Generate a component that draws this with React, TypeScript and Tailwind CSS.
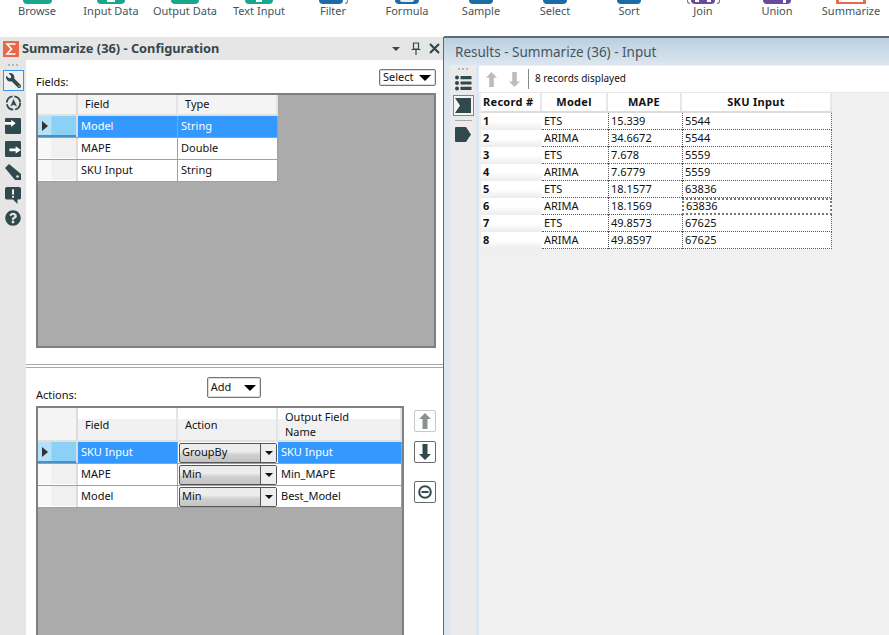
import React from "react";
import { FaWrench, FaQuestionCircle } from "react-icons/fa";

const toolbarItems: { label: string; icon: string; inner?: React.ReactNode; side?: boolean }[] = [
  { label: "Browse", icon: "w-[29px] rounded-b-md bg-[#17a78d]" },
  { label: "Input Data", icon: "w-[28px] rounded-b-md bg-[#17a78d]", inner: <div className="w-[8px] h-[2px] bg-white" /> },
  { label: "Output Data", icon: "w-[28px] rounded-b-sm bg-[#17a78d]" },
  { label: "Text Input", icon: "w-[28px] rounded-b-md bg-[#17a78d]", inner: <div className="w-[6px] h-[2px] bg-white" /> },
  { label: "Filter", icon: "w-[24px] rounded-b-full bg-[#1c6aa6]", side: true },
  { label: "Formula", icon: "w-[24px] rounded-b-full bg-[#1c6aa6]", inner: <div className="w-[14px] h-[2px] rounded-b-full bg-[#dfeaf3]" /> },
  { label: "Sample", icon: "w-[24px] rounded-b-full bg-[#1c6aa6]" },
  { label: "Select", icon: "w-[24px] rounded-b-full bg-[#1c6aa6]" },
  { label: "Sort", icon: "w-[24px] rounded-b-full bg-[#1c6aa6]" },
  { label: "Join", icon: "w-[24px] rounded-b-sm bg-[#6a4a9e]", side: true, inner: <div className="w-[16px] flex justify-between"><div className="w-[4px] h-[2px] bg-white" /><div className="w-[4px] h-[2px] bg-white" /></div> },
  { label: "Union", icon: "w-[28px] rounded-b-sm bg-[#6a4a9e]", inner: <div className="w-[18px] flex justify-end"><div className="w-[3px] h-[3px] bg-white" /></div> },
  { label: "Summarize", icon: "w-[30px] bg-[#e8694a]", inner: <div className="w-[24px] h-[2px] bg-white" /> },
];

const results = [
  ["1", "ETS", "15.339", "5544"],
  ["2", "ARIMA", "34.6672", "5544"],
  ["3", "ETS", "7.678", "5559"],
  ["4", "ARIMA", "7.6779", "5559"],
  ["5", "ETS", "18.1577", "63836"],
  ["6", "ARIMA", "18.1569", "63836"],
  ["7", "ETS", "49.8573", "67625"],
  ["8", "ARIMA", "49.8597", "67625"],
];

const ICON = "#30494c";

const BlockArrow = ({ up, color, w, h }: { up?: boolean; color: string; w: number; h: number }) => (
  <svg width={w} height={h} viewBox="0 0 12 16" preserveAspectRatio="none" className={up ? "" : "rotate-180"}>
    <path d="M6 0 L12 6 H8.5 V16 H3.5 V6 H0 Z" fill={color} />
  </svg>
);

const RowHeader = ({ active }: { active?: boolean }) => (
  <div
    className={
      active
        ? "w-[38px] shrink-0 flex items-center pl-[4px] border-b-2 border-[#4a90c8] bg-[linear-gradient(90deg,#b4e0f8_0%,#b4e0f8_35%,#8bd0f5_36%,#8bd0f5_100%)]"
        : "w-[38px] shrink-0 border-b border-white bg-[linear-gradient(90deg,#f8f8f8_0%,#f8f8f8_35%,#f0f0f0_36%,#f0f0f0_100%)]"
    }
  >
    {active && <div className="w-0 h-0 border-y-[5px] border-y-transparent border-l-[6px] border-l-[#333]" />}
  </div>
);

const Cell = ({ w, active, children }: { w: string; active?: boolean; children?: React.ReactNode }) => (
  <div
    className={`${w} shrink-0 flex items-center pl-[3px] border-r border-[#a0a0a0] ${
      active ? "bg-[#3399ff] text-white" : "bg-white text-[#111]"
    }`}
  >
    {children}
  </div>
);

const HeadCell = ({ w, extra, children }: { w: string; extra?: string; children?: React.ReactNode }) => (
  <div className={`${w} ${extra ?? ""} shrink-0 flex items-center pl-[7px] leading-[15px] border-r-2 border-[#e4e4e4] text-[#111]`}>
    <span>{children}</span>
  </div>
);

const ComboCell = ({ value }: { value: string }) => (
  <div className="w-[100px] shrink-0 flex items-center bg-white px-px">
    <div className="h-[20px] flex-1 flex items-center justify-between rounded-[2px] border border-[#555] bg-[linear-gradient(180deg,#ededed_0%,#ededed_40%,#cfcfcf_60%,#c4c4c4_100%)]">
      <span className="pl-[2px] text-[#111]">{value}</span>
      <div className="w-[16px] h-full flex items-center justify-center border-l border-[#555] bg-[#eeeeee]">
        <div className="w-0 h-0 border-x-[4px] border-x-transparent border-t-[4px] border-t-[#111]" />
      </div>
    </div>
  </div>
);

const DropButton = ({ label, w, h }: { label: string; w: string; h: string }) => (
  <div className={`${w} ${h} flex items-center justify-between pl-[3px] pr-[4px] rounded-[2px] border border-[#777] bg-white shadow-[inset_0_0_0_1px_#dddddd]`}>
    <span className="text-[#111]">{label}</span>
    <div className="w-0 h-0 border-x-[6px] border-x-transparent border-t-[6px] border-t-black" />
  </div>
);

const SideButton = ({ children, extra }: { children: React.ReactNode; extra?: string }) => (
  <div className={`w-[22px] h-[22px] flex items-center justify-center rounded-[2px] border ${extra}`}>{children}</div>
);

const RailIcons = () => (
  <div className="w-[26px] shrink-0 flex flex-col items-center bg-[#e6e6e6]">
    <div className="mt-[4px] h-[2px] w-[10px] bg-[repeating-linear-gradient(90deg,#b5b5b5_0px,#b5b5b5_2px,transparent_2px,transparent_4px)]" />
    <div className="mt-[4px] w-[21px] h-[21px] flex items-center justify-center border border-[#3a97e8] bg-[#f0f0f0]">
      <FaWrench size={15} color={ICON} className="-scale-x-100" />
    </div>
    <svg className="mt-[4px]" width="17" height="16" viewBox="0 0 18 18">
      <circle cx="9" cy="9" r="7.5" fill="none" stroke={ICON} strokeWidth="2" strokeDasharray="10 2" />
      <path d="M9 4.5 L13 13 L9 11 L5.5 13 Z" fill={ICON} />
    </svg>
    <svg className="mt-[7px]" width="16" height="16" viewBox="0 0 18 18">
      <rect width="18" height="18" rx="1.5" fill={ICON} />
      <path d="M0 4.5 H7 V2 L12 6 L7 10 V7.5 H0 Z" fill="#fff" />
    </svg>
    <svg className="mt-[7px]" width="16" height="16" viewBox="0 0 18 18">
      <rect width="18" height="18" rx="1.5" fill={ICON} />
      <path d="M5 8.5 H12 V6 L18 10 L12 14 V11.5 H5 Z" fill="#fff" />
    </svg>
    <svg className="mt-[7px]" width="16" height="16" viewBox="0 0 16 16">
      <path d="M0 4 L4 0 L16 10 V16 H10 Z" fill={ICON} />
      <circle cx="12.5" cy="12.5" r="1.3" fill="#e6e6e6" />
    </svg>
    <svg className="mt-[7px]" width="16" height="17" viewBox="0 0 18 19">
      <path d="M2 0 H16 Q18 0 18 2 V12 Q18 14 16 14 H14 L14 19 L9 14 H2 Q0 14 0 12 V2 Q0 0 2 0 Z" fill={ICON} />
      <rect x="8" y="2.5" width="2" height="6" fill="#fff" />
      <rect x="8" y="10" width="2" height="2" fill="#fff" />
    </svg>
    <FaQuestionCircle size={16} color={ICON} className="mt-[6px]" />
  </div>
);

export default function App() {
  return (
    <div className="w-[889px] h-[635px] overflow-hidden flex flex-col bg-white text-[11px] font-['Noto_Sans',sans-serif]">
      {/* top ribbon, icons are cut off by the window edge */}
      <div className="h-[37px] shrink-0 flex">
        {toolbarItems.map((item) => (
          <div key={item.label} className="w-[74px] flex flex-col items-center text-[#44545a]">
            <div className="flex items-start">
              {item.side && item.label === "Join" && <span className="mr-[1px] h-[4px] w-[3px] rounded-bl-full border-b border-l border-[#777]" />}
              <div className={`h-[4px] flex justify-center items-start ${item.icon}`}>{item.inner}</div>
              {item.side && <span className="ml-[2px] h-[4px] w-[3px] rounded-br-full border-b border-r border-[#777]" />}
            </div>
            <span className="leading-[14px]">{item.label}</span>
          </div>
        ))}
      </div>

      <div className="flex-1 flex min-h-0">
        {/* config panel */}
        <div className="w-[444px] shrink-0 flex flex-col border-r border-[#5f6b72]">
          <div className="h-[23px] shrink-0 flex items-center bg-[#e6e6e6] pl-[3px] pr-[3px]">
            <svg width="16" height="16" viewBox="0 0 16 16">
              <rect width="16" height="16" fill="#e8694a" />
              <path d="M12.5 3 H4 L8.5 8 L4 13 H12.5" fill="none" stroke="#fff" strokeWidth="1.6" />
            </svg>
            <span className="ml-[3px] text-[12.8px] font-bold text-[#36474d]">Summarize (36)  - Configuration</span>
            <div className="ml-auto w-0 h-0 border-x-[4px] border-x-transparent border-t-[4px] border-t-[#30494c]" />
            <svg className="ml-[11px]" width="10" height="13" viewBox="0 0 10 13">
              <path d="M2.5 1 H7.5 V7 H2.5 Z M0.5 7.5 H9.5 M5 8 V13" fill="none" stroke="#30494c" strokeWidth="1.2" />
            </svg>
            <svg className="ml-[8px]" width="11" height="11" viewBox="0 0 11 11">
              <path d="M1 1 L10 10 M10 1 L1 10" stroke="#30494c" strokeWidth="2.2" />
            </svg>
          </div>
          <div className="flex-1 flex min-h-0">
            <RailIcons />
            <div className="flex-1 flex flex-col min-w-0">
              {/* fields */}
              <div className="h-[304px] shrink-0 pl-[10px] pr-[7px] flex flex-col">
                <div className="h-[33px] flex items-end justify-between">
                  <span className="leading-[15px] mb-[4px] text-[#111]">Fields:</span>
                  <DropButton label="Select" w="w-[57px]" h="h-[17px] mb-[7px]" />
                </div>
                <div className="h-[255px] border-2 border-[#808080] bg-[#ababab]">
                  <div className="h-[21px] w-[240px] flex bg-[#f4f4f4] border-b-2 border-[#e0e0e0]">
                    <div className="w-[40px] shrink-0 border-r-2 border-[#dcdcdc]" />
                    <HeadCell w="w-[100px]" extra="pb-[2px]">Field</HeadCell>
                    <HeadCell w="w-[100px]" extra="pb-[2px]">Type</HeadCell>
                  </div>
                  {[
                    ["Model", "String"],
                    ["MAPE", "Double"],
                    ["SKU Input", "String"],
                  ].map((row, i) => (
                    <div key={row[0]} className="h-[22px] w-[240px] flex border-b border-[#a0a0a0]">
                      <RowHeader active={i === 0} />
                      <div className="w-[2px] bg-[#dcdcdc]" />
                      <Cell w="w-[100px]" active={i === 0}>{row[0]}</Cell>
                      <Cell w="w-[100px]" active={i === 0}>{row[1]}</Cell>
                    </div>
                  ))}
                </div>
              </div>
              {/* splitter */}
              <div className="h-[4px] shrink-0 border-y border-[#a8a8a8]" />
              {/* actions */}
              <div className="flex-1 min-h-0 pl-[10px] pr-[7px] flex flex-col">
                <div className="h-[38px] shrink-0 flex items-end">
                  <span className="leading-[15px] mb-[4px] text-[#111]">Actions:</span>
                  <DropButton label="Add" w="w-[54px] ml-[130px]" h="h-[21px] mb-[8px]" />
                </div>
                <div className="flex-1 flex min-h-0">
                  <div className="w-[368px] shrink-0 border-2 border-b-0 border-[#808080] bg-[#ababab]">
                    <div className="h-[34px] flex bg-[linear-gradient(180deg,#ffffff_0%,#ffffff_35%,#f1f1f1_36%,#f1f1f1_100%)] border-b-2 border-[#e0e0e0]">
                      <div className="w-[40px] shrink-0 border-r-2 border-[#dcdcdc] bg-[#f4f4f4]" />
                      <HeadCell w="w-[100px]">Field</HeadCell>
                      <HeadCell w="w-[100px]">Action</HeadCell>
                      <HeadCell w="w-[124px]">
                        Output Field
                        <br />
                        Name
                      </HeadCell>
                    </div>
                    {[
                      ["SKU Input", "GroupBy", "SKU Input"],
                      ["MAPE", "Min", "Min_MAPE"],
                      ["Model", "Min", "Best_Model"],
                    ].map((row, i) => (
                      <div key={row[0]} className="h-[22px] flex border-b border-[#a0a0a0]">
                        <RowHeader active={i === 0} />
                        <div className="w-[2px] bg-[#dcdcdc]" />
                        <Cell w="w-[100px]" active={i === 0}>{row[0]}</Cell>
                        <ComboCell value={row[1]} />
                        <Cell w="w-[124px]" active={i === 0}>{row[2]}</Cell>
                      </div>
                    ))}
                  </div>
                  <div className="ml-[10px] pt-[4px] flex flex-col">
                    <SideButton extra="border-[#c8c8c8]">
                      <BlockArrow up color="#8a9294" w={12} h={16} />
                    </SideButton>
                    <div className="h-[9px]" />
                    <SideButton extra="border-[#6a6a6a]">
                      <BlockArrow color={ICON} w={12} h={16} />
                    </SideButton>
                    <div className="h-[18px]" />
                    <SideButton extra="border-[#6a6a6a]">
                      <svg width="14" height="14" viewBox="0 0 14 14">
                        <circle cx="7" cy="7" r="5.8" fill="none" stroke={ICON} strokeWidth="2" />
                        <rect x="3.5" y="6" width="7" height="2" fill={ICON} />
                      </svg>
                    </SideButton>
                  </div>
                </div>
              </div>
            </div>
          </div>
        </div>

        {/* results panel */}
        <div className="flex-1 flex flex-col min-w-0 border-t-2 border-[#5f6b72] -mt-px bg-[#dce7f2]">
          <div className="h-[27px] shrink-0 flex items-center pl-[11px] pt-[2px] text-[13.5px] text-[#44565c] bg-[linear-gradient(180deg,#bccfe0_0%,#dbe6f0_100%)]">
            Results - Summarize (36) - Input
          </div>
          <div className="flex-1 flex min-h-0 pl-[6px]">
            <div className="w-[26px] shrink-0 flex flex-col items-center bg-[#ebebeb]">
              <div className="mt-[3px] h-[2px] w-[10px] bg-[repeating-linear-gradient(90deg,#b5b5b5_0px,#b5b5b5_2px,transparent_2px,transparent_4px)]" />
              <svg className="mt-[5px]" width="17" height="16" viewBox="0 0 17 16">
                <circle cx="2" cy="2.5" r="2" fill={ICON} />
                <circle cx="2" cy="8" r="2" fill={ICON} />
                <circle cx="2" cy="13.5" r="2" fill={ICON} />
                <rect x="5.5" y="1" width="11" height="3.2" rx="0.5" fill={ICON} />
                <rect x="5.5" y="6.4" width="11" height="3.2" rx="0.5" fill={ICON} />
                <rect x="5.5" y="11.8" width="11" height="3.2" rx="0.5" fill={ICON} />
              </svg>
              <div className="mt-[4px] w-[21px] h-[21px] flex items-center justify-center border border-[#3a97e8] bg-[#f4f4f4]">
                <svg width="16" height="15" viewBox="0 0 16 15">
                  <path d="M0 0 H16 V15 H0 L5 7.5 Z" fill={ICON} />
                </svg>
              </div>
              <div className="mt-[4px] w-[17px] h-[1px] bg-[#a8a8a8]" />
              <svg className="mt-[6px]" width="16" height="15" viewBox="0 0 16 15">
                <path d="M1 0 H11 L16 7.5 L11 15 H1 Q0 15 0 14 V1 Q0 0 1 0 Z" fill={ICON} />
              </svg>
            </div>
            <div className="w-[3px] shrink-0" />
            <div className="flex-1 flex flex-col min-w-0 bg-[#f0f0f0]">
              <div className="h-[27px] shrink-0 mt-[1px] flex items-center bg-white border-b border-[#e8e8e8] text-[#111]">
                <div className="ml-[7px]">
                  <BlockArrow up color="#bdbdbd" w={11} h={15} />
                </div>
                <div className="ml-[12px]">
                  <BlockArrow color="#bdbdbd" w={11} h={15} />
                </div>
                <div className="ml-[8px] h-[20px] w-px bg-[#888]" />
                <span className="ml-[6px] mb-[2px] text-[10px]">8 records displayed</span>
              </div>
              <div className="w-[351px] ml-[2px]">
                <div className="h-[20px] flex font-bold tracking-[0.3px] text-[#111] bg-white border-b-2 border-[#dcdcdc]">
                  <div className="w-[61px] flex items-center pl-[2px] border-r-2 border-[#e8e8e8]">Record #</div>
                  <div className="w-[66px] flex items-center justify-center border-r-2 border-[#e8e8e8]">Model</div>
                  <div className="w-[74px] flex items-center justify-center border-r-2 border-[#e8e8e8]">MAPE</div>
                  <div className="w-[150px] flex items-center justify-center border-r-2 border-[#e8e8e8]">SKU Input</div>
                </div>
                {results.map((row) => (
                  <div key={row[0]} className="h-[17px] flex text-[#111]">
                    <div className="w-[61px] flex items-center pl-[2px] font-bold bg-[linear-gradient(180deg,#ffffff_0%,#ffffff_50%,#ececec_100%)]">{row[0]}</div>
                    <div className="w-[66px] flex items-center pl-[2px] bg-white border-b border-dotted border-[#555]">{row[1]}</div>
                    <div className="w-[74px] flex items-center pl-[2px] bg-white border-b border-l border-dotted border-[#555]">{row[2]}</div>
                    <div className={`w-[150px] flex items-center pl-[2px] bg-white ${row[0] === "6" ? "border-2 border-dotted border-[#777]" : "border-b border-x border-dotted border-[#555]"}`}>{row[3]}</div>
                  </div>
                ))}
              </div>
            </div>
          </div>
        </div>
      </div>
    </div>
  );
}
